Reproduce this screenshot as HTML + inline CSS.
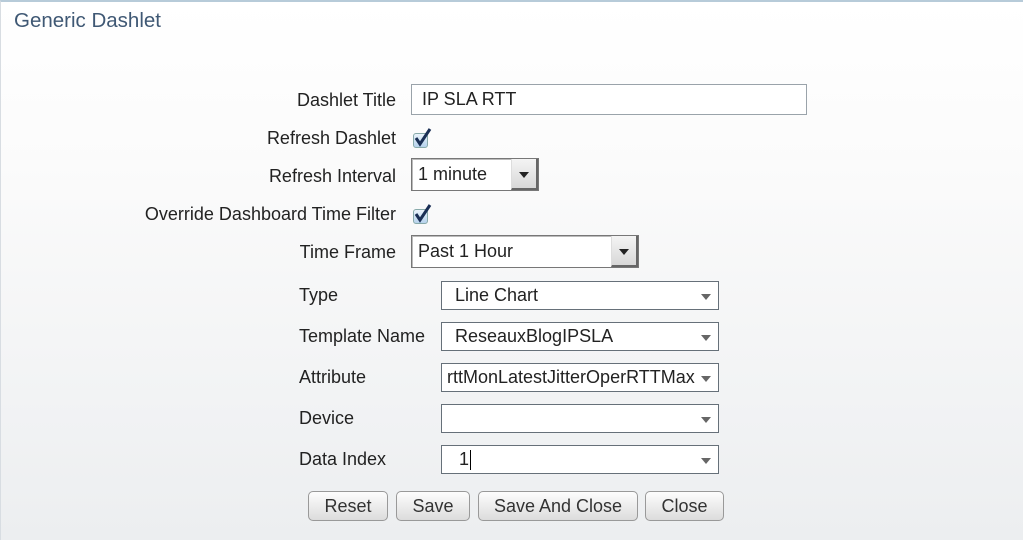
<!DOCTYPE html>
<html><head><style>
body{margin:0;width:1024px;height:543px;overflow:hidden;font-family:"Liberation Sans",sans-serif;color:#222}
.page{position:absolute;left:0;top:0;width:1022px;height:540px;border-top:2px solid #b7cbd9;border-left:1px solid #d8dde2;background:linear-gradient(#fff 0%,#fbfbfb 30%,#eceef0 100%)}
.a{position:absolute}
.lbl{position:absolute;font-size:18px;white-space:nowrap}
.r{text-align:right;right:627px}
.inp{position:absolute;background:#fff;border:1px solid #9aa3aa;box-sizing:border-box;font-size:18px;padding-left:10px;display:flex;align-items:center}
.sel{position:absolute;background:#fff;border:1px solid #777;box-shadow:inset 1px 1px 0 #bbb;box-sizing:border-box;font-size:18px;padding-left:6px;display:flex;align-items:center}
.sel .b{position:absolute;right:0;top:0;bottom:0;width:24px;background:linear-gradient(#f4f4f4,#d8d8d8);border-left:1px solid #ddd;border-right:2px solid #666;border-bottom:2px solid #666}
.tri{position:absolute;width:0;height:0;border-left:5px solid transparent;border-right:5px solid transparent;border-top:6px solid #222}
.combo{position:absolute;background:#fff;border:1px solid #667079;box-sizing:border-box;font-size:18px;padding-left:13px;display:flex;align-items:center;white-space:nowrap;overflow:hidden}
.combo .tri{border-top-color:#666;right:7px;top:12px}
.btn{position:absolute;top:489px;height:30px;border:1px solid #999;border-radius:5px;background:linear-gradient(#fdfdfd,#dcdcdc);box-sizing:border-box;font-size:18px;text-align:center;line-height:28px;color:#333}
.cb{position:absolute;width:15px;height:15px;border:1px solid #8aa;border-radius:3px;background:linear-gradient(#eaf3fb,#b6d2ec);box-sizing:border-box}
</style></head><body>
<div class="page">
<div class="lbl" style="left:13px;top:7px;font-size:20.5px;color:#3f5874">Generic Dashlet</div>

<div class="lbl r" style="top:88px">Dashlet Title</div>
<div class="inp" style="left:410px;top:82px;width:396px;height:31px">IP SLA RTT</div>

<div class="lbl r" style="top:126px">Refresh Dashlet</div>
<div class="cb" style="left:412px;top:131px"></div>
<svg class="a" style="left:410px;top:124px" width="22" height="22"><path d="M5 12 L9 18 L19 3" stroke="#1a2f55" stroke-width="3" fill="none"/></svg>

<div class="lbl r" style="top:164px">Refresh Interval</div>
<div class="sel" style="left:410px;top:156px;width:128px;height:33px">1 minute<div class="b"><div class="tri" style="left:7px;top:13px"></div></div></div>

<div class="lbl r" style="top:202px">Override Dashboard Time Filter</div>
<div class="cb" style="left:412px;top:207px"></div>
<svg class="a" style="left:410px;top:200px" width="22" height="22"><path d="M5 12 L9 18 L19 3" stroke="#1a2f55" stroke-width="3" fill="none"/></svg>

<div class="lbl r" style="top:240px">Time Frame</div>
<div class="sel" style="left:410px;top:233px;width:228px;height:33px">Past 1 Hour<div class="b"><div class="tri" style="left:7px;top:13px"></div></div></div>

<div class="lbl" style="left:298px;top:283px">Type</div>
<div class="combo" style="left:440px;top:279px;width:278px;height:29px">Line Chart<div class="tri"></div></div>
<div class="lbl" style="left:298px;top:324px">Template Name</div>
<div class="combo" style="left:440px;top:320px;width:278px;height:29px">ReseauxBlogIPSLA<div class="tri"></div></div>
<div class="lbl" style="left:298px;top:365px">Attribute</div>
<div class="combo" style="left:440px;top:361px;width:278px;height:29px;padding-left:5px">rttMonLatestJitterOperRTTMax<div style="position:absolute;right:0;top:0;bottom:0;width:22px;background:#fff"></div><div class="tri"></div></div>
<div class="lbl" style="left:298px;top:406px">Device</div>
<div class="combo" style="left:440px;top:402px;width:278px;height:29px"><div class="tri"></div></div>
<div class="lbl" style="left:298px;top:447px">Data Index</div>
<div class="combo" style="left:440px;top:443px;width:278px;height:29px;padding-left:17px">1<span style="border-left:1px solid #000;height:20px;margin-left:1px"></span><div class="tri"></div></div>

<div class="btn" style="left:307px;width:80px">Reset</div>
<div class="btn" style="left:395px;width:74px">Save</div>
<div class="btn" style="left:477px;width:160px">Save And Close</div>
<div class="btn" style="left:644px;width:79px">Close</div>
</div>
<div class="a" style="left:0;top:540px;width:1024px;height:3px;background:#fff"></div>
</body></html>
